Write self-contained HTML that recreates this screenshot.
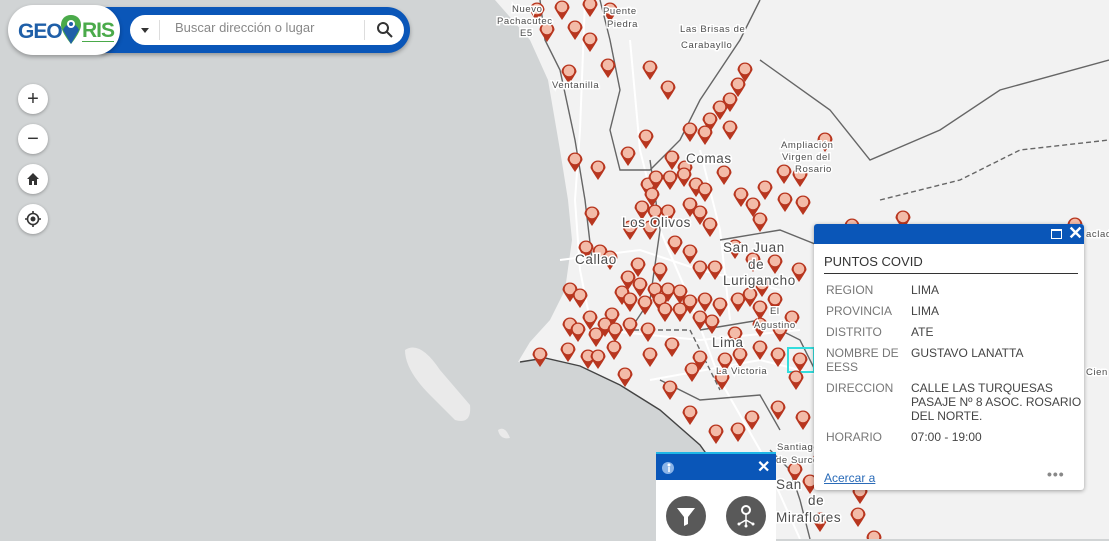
<!DOCTYPE html>
<html><head><meta charset="utf-8"><style>
body{margin:0;width:1109px;height:539px;overflow:hidden;background:#d1d4d5;font-family:"Liberation Sans",sans-serif;position:relative}
svg.map{position:absolute;left:0;top:0}
.lbl{font-family:"Liberation Sans",sans-serif;font-size:13.5px;fill:#4d4d4d;stroke:#fff;stroke-width:3px;paint-order:stroke;letter-spacing:.6px}
.lbs{font-size:9.5px}
.bar{position:absolute;left:100px;top:7px;width:310px;height:46px;background:#0a56b8;border-radius:0 23px 23px 0;box-shadow:0 2px 4px rgba(0,0,0,.3)}
.logo{position:absolute;left:8px;top:5px;width:112px;height:50px;background:#fff;border-radius:25px;box-shadow:0 2px 4px rgba(0,0,0,.3)}
.search{position:absolute;left:130px;top:15px;width:274px;height:30px;background:#fff;border-radius:15px}
.zb{position:absolute;left:18px;width:30px;height:30px;border-radius:50%;background:#fff;box-shadow:0 1px 3px rgba(0,0,0,.3);text-align:center;line-height:30px;font-size:20px;color:#333}
.pop{position:absolute;left:814px;top:224px;width:270px;height:266px;background:#fff;border-radius:3px;box-shadow:0 1px 4px rgba(0,0,0,.35);font-size:12px;color:#444}
.pop .h{height:20px;background:#0a56b8;border-radius:3px 3px 0 0}
.row{position:absolute;left:12px;color:#777}
.val{position:absolute;left:97px;color:#444;line-height:14px}
.wid{position:absolute;left:656px;top:452px;width:120px;height:87px;background:#fff;border-top:2px solid #1fb6e6}
.wid .h{height:26px;background:#0a56b8}
.cb{position:absolute;top:42px;width:40px;height:40px;border-radius:50%;background:#595959}
</style></head><body>
<svg class="map" width="1109" height="539" viewBox="0 0 1109 539">
<defs>
<g id="p"><path d="M-7.5,0 A7.5,7.5 0 1 1 7.5,0 Q5.5,4 0,12 Q-5.5,4 -7.5,0Z" fill="#b8361f"/><circle cx="0" cy="-1" r="5.3" fill="#f3bba8"/></g>
</defs>
<path d="M495,0 L530,40 L548,80 L560,150 L568,200 L572,240 L565,290 L550,320 L530,342 L518,362 L545,358 L580,366 L620,385 L660,410 L700,445 L725,480 L745,539 L1109,539 L1109,0Z" fill="#f2f2f2"/>
<path d="M405,350 Q420,340 440,370 L470,405 Q472,425 455,420 L430,395 Q405,370 405,350Z" fill="#eaeaea"/>
<path d="M498,430 Q505,425 510,438 Q500,440 498,430Z" fill="#eaeaea"/>
<g stroke="#fff" stroke-width="2" fill="none">
<path d="M585,0 L580,130 L575,200 L580,270 L590,320"/><path d="M630,40 L640,150 L660,230 L690,300 L720,380 L760,450 L800,539"/>
<path d="M560,260 L640,250 L700,270 L780,290"/><path d="M600,330 L700,340 L800,330"/><path d="M650,380 L760,360 L840,380"/>
<path d="M700,150 L720,230 L730,320"/><path d="M840,300 L900,330 L1000,360"/>
</g>
<g stroke="#666" stroke-width="1.4" fill="none">
<path d="M540,0 L545,40 L560,70 L575,140 L585,200 L592,260"/><path d="M600,0 L610,40 L620,90 L610,130 L620,170 L650,170 L680,140 L700,100 L740,40 L760,0"/>
<path d="M760,60 L830,110 L870,160 L940,130 L1000,90 L1109,60"/><path d="M650,160 L660,230 L650,300 L630,330"/>
<path d="M720,240 L780,230 L830,250 L900,240"/><path d="M700,330 L760,320 L800,340 L820,380"/>
<path d="M660,380 L700,400 L760,395 L780,430"/><path d="M770,450 L790,470 L800,500 L810,539"/>
<path d="M880,200 L960,180 L1020,150 L1109,140" stroke-dasharray="5,3"/><path d="M610,330 L690,330 L720,390" stroke-dasharray="5,3"/>
<path d="M520,362 L545,358 L580,366 L620,385 L660,410 L700,445 L725,480" stroke="#444"/>
</g>
<rect x="788" y="348" width="26" height="24" fill="none" stroke="#3dd" stroke-width="2"/>
<g>
<use href="#p" x="537" y="10"/><use href="#p" x="562" y="8"/><use href="#p" x="590" y="5"/><use href="#p" x="610" y="10"/><use href="#p" x="575" y="28"/><use href="#p" x="590" y="40"/><use href="#p" x="547" y="30"/><use href="#p" x="569" y="72"/><use href="#p" x="608" y="66"/><use href="#p" x="650" y="68"/><use href="#p" x="668" y="88"/><use href="#p" x="745" y="70"/><use href="#p" x="738" y="85"/><use href="#p" x="730" y="100"/><use href="#p" x="720" y="108"/><use href="#p" x="710" y="120"/><use href="#p" x="690" y="130"/><use href="#p" x="705" y="133"/><use href="#p" x="730" y="128"/><use href="#p" x="646" y="137"/><use href="#p" x="628" y="154"/><use href="#p" x="575" y="160"/><use href="#p" x="598" y="168"/><use href="#p" x="672" y="158"/><use href="#p" x="685" y="168"/><use href="#p" x="648" y="185"/><use href="#p" x="656" y="178"/><use href="#p" x="670" y="178"/><use href="#p" x="684" y="175"/><use href="#p" x="696" y="185"/><use href="#p" x="705" y="190"/><use href="#p" x="724" y="173"/><use href="#p" x="741" y="195"/><use href="#p" x="765" y="188"/><use href="#p" x="784" y="172"/><use href="#p" x="800" y="175"/><use href="#p" x="825" y="140"/><use href="#p" x="785" y="200"/><use href="#p" x="803" y="203"/><use href="#p" x="753" y="205"/><use href="#p" x="760" y="220"/><use href="#p" x="652" y="195"/><use href="#p" x="655" y="212"/><use href="#p" x="690" y="205"/><use href="#p" x="668" y="212"/><use href="#p" x="642" y="208"/><use href="#p" x="700" y="213"/><use href="#p" x="710" y="225"/><use href="#p" x="592" y="214"/><use href="#p" x="586" y="248"/><use href="#p" x="600" y="252"/><use href="#p" x="610" y="258"/><use href="#p" x="630" y="228"/><use href="#p" x="650" y="228"/><use href="#p" x="675" y="243"/><use href="#p" x="690" y="252"/><use href="#p" x="735" y="247"/><use href="#p" x="753" y="260"/><use href="#p" x="775" y="262"/><use href="#p" x="799" y="270"/><use href="#p" x="762" y="285"/><use href="#p" x="638" y="265"/><use href="#p" x="660" y="270"/><use href="#p" x="700" y="268"/><use href="#p" x="715" y="268"/><use href="#p" x="628" y="278"/><use href="#p" x="640" y="285"/><use href="#p" x="655" y="290"/><use href="#p" x="668" y="290"/><use href="#p" x="680" y="292"/><use href="#p" x="622" y="293"/><use href="#p" x="630" y="300"/><use href="#p" x="645" y="303"/><use href="#p" x="660" y="300"/><use href="#p" x="690" y="302"/><use href="#p" x="705" y="300"/><use href="#p" x="720" y="305"/><use href="#p" x="738" y="300"/><use href="#p" x="750" y="295"/><use href="#p" x="760" y="308"/><use href="#p" x="775" y="300"/><use href="#p" x="792" y="318"/><use href="#p" x="570" y="290"/><use href="#p" x="580" y="296"/><use href="#p" x="612" y="315"/><use href="#p" x="590" y="318"/><use href="#p" x="605" y="325"/><use href="#p" x="570" y="325"/><use href="#p" x="578" y="330"/><use href="#p" x="596" y="335"/><use href="#p" x="615" y="330"/><use href="#p" x="630" y="325"/><use href="#p" x="648" y="330"/><use href="#p" x="665" y="310"/><use href="#p" x="680" y="310"/><use href="#p" x="700" y="318"/><use href="#p" x="712" y="322"/><use href="#p" x="735" y="334"/><use href="#p" x="760" y="325"/><use href="#p" x="780" y="330"/><use href="#p" x="540" y="355"/><use href="#p" x="568" y="350"/><use href="#p" x="588" y="357"/><use href="#p" x="598" y="357"/><use href="#p" x="614" y="348"/><use href="#p" x="650" y="355"/><use href="#p" x="672" y="345"/><use href="#p" x="700" y="358"/><use href="#p" x="725" y="360"/><use href="#p" x="740" y="355"/><use href="#p" x="760" y="348"/><use href="#p" x="778" y="355"/><use href="#p" x="800" y="360"/><use href="#p" x="625" y="375"/><use href="#p" x="670" y="388"/><use href="#p" x="692" y="370"/><use href="#p" x="722" y="378"/><use href="#p" x="796" y="378"/><use href="#p" x="690" y="413"/><use href="#p" x="716" y="432"/><use href="#p" x="738" y="430"/><use href="#p" x="752" y="418"/><use href="#p" x="778" y="408"/><use href="#p" x="803" y="418"/><use href="#p" x="822" y="430"/><use href="#p" x="840" y="445"/><use href="#p" x="860" y="492"/><use href="#p" x="858" y="515"/><use href="#p" x="874" y="538"/><use href="#p" x="852" y="226"/><use href="#p" x="903" y="218"/><use href="#p" x="1075" y="225"/><use href="#p" x="820" y="460"/><use href="#p" x="810" y="482"/><use href="#p" x="795" y="470"/><use href="#p" x="820" y="520"/>
</g>
<text class="lbl lbs" x="512" y="12">Nuevo</text><text class="lbl lbs" x="497" y="24">Pachacutec</text><text class="lbl lbs" x="520" y="36">E5</text>
<text class="lbl lbs" x="603" y="14">Puente</text><text class="lbl lbs" x="607" y="27">Piedra</text>
<text class="lbl lbs" x="680" y="32">Las Brisas de</text><text class="lbl lbs" x="681" y="48">Carabayllo</text>
<text class="lbl lbs" x="552" y="88">Ventanilla</text>
<text class="lbl" x="686" y="163">Comas</text>
<text class="lbl lbs" x="781" y="148">Ampliación</text><text class="lbl lbs" x="782" y="160">Virgen del</text><text class="lbl lbs" x="795" y="172">Rosario</text>
<text class="lbl" x="622" y="227">Los Olivos</text><text class="lbl" x="575" y="264">Callao</text>
<text class="lbl" x="723" y="252">San Juan</text><text class="lbl" x="748" y="269">de</text><text class="lbl" x="723" y="285">Lurigancho</text>
<text class="lbl lbs" x="770" y="314">El</text><text class="lbl lbs" x="754" y="328">Agustino</text>
<text class="lbl" x="712" y="347">Lima</text><text class="lbl lbs" x="716" y="374">La Victoria</text>
<text class="lbl lbs" x="777" y="450">Santiago</text><text class="lbl lbs" x="776" y="463">de Surco</text>
<text class="lbl" x="776" y="489">San</text><text class="lbl" x="808" y="505">de</text><text class="lbl" x="776" y="522">Miraflores</text>
<text class="lbl lbs" x="1086" y="237">aclad</text><text class="lbl lbs" x="1086" y="375">Cien</text>
</svg>

<div class="bar"></div>
<div class="logo"><div style="position:absolute;left:10px;top:15px;font:bold 21px 'Liberation Sans',sans-serif;color:#1f5fa8;letter-spacing:-1px">GEO</div>
<svg style="position:absolute;left:52px;top:9px" width="22" height="34" viewBox="0 0 22 34"><path d="M11,1 C5,1 1,5 1,11 C1,18 11,30 11,30 C11,30 21,18 21,11 C21,5 17,1 11,1Z" fill="#4aaa4a"/><path d="M11,10 C5,10 3,16 3,16 L11,30 L19,16 C19,16 17,10 11,10Z" fill="#1f5fa8"/><circle cx="11" cy="10" r="4" fill="#fff"/><circle cx="11" cy="10" r="2" fill="#1f5fa8"/></svg>
<div style="position:absolute;left:74px;top:15px;font:bold 21px 'Liberation Sans',sans-serif;color:#4aaa4a;letter-spacing:-1px;border-bottom:1px solid #4aaa4a;line-height:21px">RIS</div></div>
<div class="search"><div style="position:absolute;left:11px;top:13px;border:4px solid transparent;border-top:5px solid #333"></div>
<div style="position:absolute;left:29px;top:5px;width:1px;height:20px;background:#ddd"></div>
<div style="position:absolute;left:45px;top:5px;color:#888;font-size:13px">Buscar dirección o lugar</div>
<div style="position:absolute;left:234px;top:5px;width:1px;height:20px;background:#ddd"></div>
<svg style="position:absolute;left:246px;top:6px" width="18" height="18" viewBox="0 0 18 18"><circle cx="7" cy="7" r="5" fill="none" stroke="#333" stroke-width="2"/><path d="M11,11 L16,16" stroke="#333" stroke-width="2"/></svg></div>

<div class="zb" style="top:84px">+</div>
<div class="zb" style="top:124px">−</div>
<div class="zb" style="top:164px"><svg width="14" height="14" viewBox="0 0 14 14" style="margin-top:8px"><path d="M7,1 L13,7 L11,7 L11,13 L8,13 L8,9 L6,9 L6,13 L3,13 L3,7 L1,7Z" fill="#333"/></svg></div>
<div class="zb" style="top:204px"><svg width="16" height="16" viewBox="0 0 16 16" style="margin-top:7px"><circle cx="8" cy="8" r="5.5" fill="none" stroke="#333" stroke-width="1.6"/><circle cx="8" cy="8" r="2.5" fill="#333"/><path d="M8,0V2.5M8,13.5V16M0,8H2.5M13.5,8H16" stroke="#333" stroke-width="1.6"/></svg></div>

<div class="pop"><div class="h">
<div style="position:absolute;left:237px;top:5px;width:9px;height:7px;border:1.5px solid #fff;border-top-width:2.5px"></div>
<div style="position:absolute;left:254px;top:-1px;color:#fff;font-size:18px;font-weight:bold">✕</div></div>
<div style="position:absolute;left:10px;top:30px;font-size:13px;color:#333">PUNTOS COVID</div>
<div style="position:absolute;left:10px;top:49px;width:254px;height:1px;background:#333"></div>
<div class="row" style="top:59px">REGION</div><div class="val" style="top:59px">LIMA</div>
<div class="row" style="top:80px">PROVINCIA</div><div class="val" style="top:80px">LIMA</div>
<div class="row" style="top:101px">DISTRITO</div><div class="val" style="top:101px">ATE</div>
<div class="row" style="top:122px;line-height:14px">NOMBRE DE<br>EESS</div><div class="val" style="top:122px">GUSTAVO LANATTA</div>
<div class="row" style="top:157px">DIRECCION</div><div class="val" style="top:157px">CALLE LAS TURQUESAS<br>PASAJE Nº 8 ASOC. ROSARIO<br>DEL NORTE.</div>
<div class="row" style="top:206px">HORARIO</div><div class="val" style="top:206px">07:00 - 19:00</div>
<div style="position:absolute;left:10px;top:247px;color:#2a6bb8;text-decoration:underline">Acercar a</div>
<div style="position:absolute;left:233px;top:242px;color:#888;font-size:14px;font-weight:bold;letter-spacing:1px">•••</div>
</div>

<div class="wid"><div class="h">
<svg style="position:absolute;left:5px;top:7px" width="14" height="14" viewBox="0 0 14 14"><circle cx="7" cy="7" r="6" fill="#8ab4e8"/><circle cx="8" cy="4" r="1.5" fill="#fff"/><path d="M8,6V11" stroke="#fff" stroke-width="1.5"/></svg>
<div style="position:absolute;left:101px;top:3px;color:#fff;font-size:16px;font-weight:bold">✕</div></div>
<div class="cb" style="left:10px"><svg width="40" height="40" viewBox="0 0 40 40"><path d="M11,12 H29 L22,21 V28 L18,30 V21Z" fill="#fff"/></svg></div>
<div class="cb" style="left:70px"><svg width="40" height="40" viewBox="0 0 40 40"><circle cx="20" cy="14" r="4" fill="none" stroke="#fff" stroke-width="2"/><path d="M20,18V24M20,24L13,28M20,24L27,28M20,24V30" stroke="#fff" stroke-width="1.5"/><circle cx="13" cy="28" r="1.5" fill="#fff"/><circle cx="27" cy="28" r="1.5" fill="#fff"/><circle cx="20" cy="30" r="1.5" fill="#fff"/></svg></div>
</div>
</body></html>
